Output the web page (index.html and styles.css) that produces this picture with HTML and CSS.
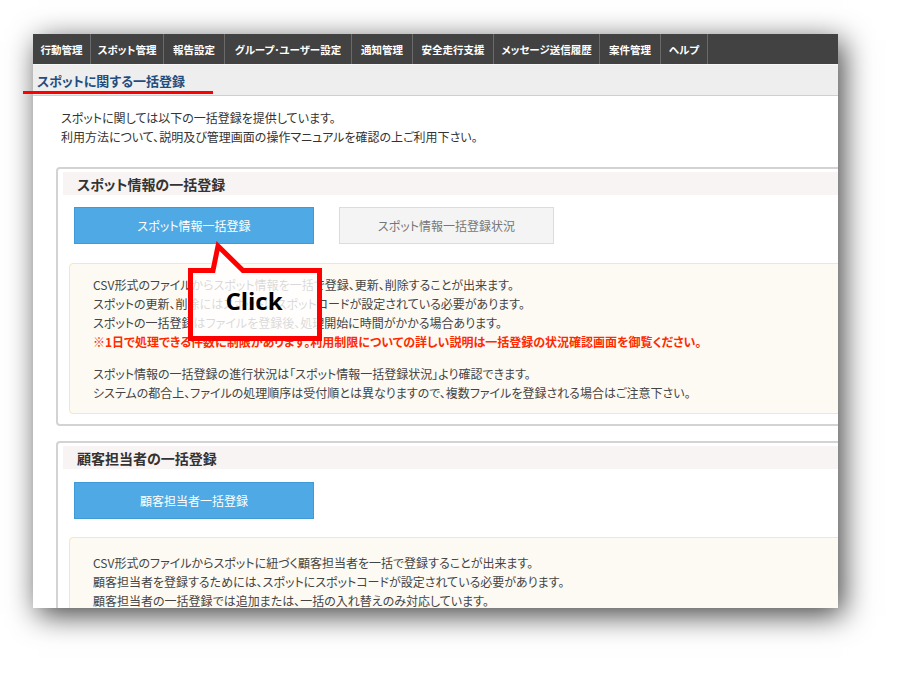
FILE: index.html
```html
<!DOCTYPE html>
<html lang="ja">
<head>
<meta charset="utf-8">
<title>スポットに関する一括登録</title>
<link rel="stylesheet" href="styles.css">
</head>
<body>
<div class="frame">
  <nav class="nav">
    <a>行動管理</a>
    <a>スポット管理</a>
    <a>報告設定</a>
    <a>グループ･ユーザー設定</a>
    <a>通知管理</a>
    <a>安全走行支援</a>
    <a>メッセージ送信履歴</a>
    <a>案件管理</a>
    <a>ヘルプ</a>
  </nav>
  <div class="subhead">スポットに関する一括登録</div>
  <div class="content">
    <p class="intro">スポットに関しては以下の一括登録を提供しています。<br>利用方法について、説明及び管理画面の操作マニュアルを確認の上ご利用下さい。</p>

    <section class="panel">
      <div class="panel-head">スポット情報の一括登録</div>
      <div class="btns">
        <div class="btn btn-primary">スポット情報一括登録</div>
        <div class="btn btn-gray">スポット情報一括登録状況</div>
      </div>
      <div class="notice">
        <p>CSV形式のファイルからスポット情報を一括で登録、更新、削除することが出来ます。<br>
        スポットの更新、削除にはスポットにスポットコードが設定されている必要があります。<br>
        スポットの一括登録はファイルを登録後、処理開始に時間がかかる場合あります。<br>
        <span class="warn">※1日で処理できる件数に制限があります。利用制限についての詳しい説明は一括登録の状況確認画面を御覧ください。</span></p>
        <p>スポット情報の一括登録の進行状況は「スポット情報一括登録状況」より確認できます。<br>
        システムの都合上、ファイルの処理順序は受付順とは異なりますので、複数ファイルを登録される場合はご注意下さい。</p>
      </div>
    </section>

    <section class="panel">
      <div class="panel-head">顧客担当者の一括登録</div>
      <div class="btns">
        <div class="btn btn-primary">顧客担当者一括登録</div>
      </div>
      <div class="notice notice-tall">
        <p>CSV形式のファイルからスポットに紐づく顧客担当者を一括で登録することが出来ます。<br>
        顧客担当者を登録するためには、スポットにスポットコードが設定されている必要があります。<br>
        顧客担当者の一括登録では追加または、一括の入れ替えのみ対応しています。</p>
      </div>
    </section>
  </div>
</div>

<div class="underline"></div>

<svg class="callout" width="150" height="115" viewBox="0 0 150 115" xmlns="http://www.w3.org/2000/svg">
  <polygon points="10.5,34.5 33,34.5 38,10 63,34.5 139.5,34.5 139.5,102.5 10.5,102.5" fill="rgba(255,255,255,0.8)" stroke="#ff0000" stroke-width="5" stroke-linejoin="miter"/>
  <text x="74" y="74" text-anchor="middle" class="callout-text">Click</text>
</svg>
</body>
</html>
```

FILE: styles.css
```css
* { box-sizing: border-box; }

body {
  margin: 0;
  background: #fff;
  font-family: "Noto Sans CJK JP", "Liberation Sans", sans-serif;
  font-feature-settings: "palt";
  position: relative;
  min-height: 673px;
}

.frame {
  margin: 34px 0 0 33px;
  width: 805px;
  height: 574px;
  overflow: hidden;
  background: #fff;
  box-shadow: 5px 7px 28px rgba(0, 0, 0, 0.75);
}

.nav {
  display: flex;
  height: 30px;
  background: #424242;
}

.nav a {
  color: #fff;
  font-size: 10.5px;
  font-weight: 700;
  display: flex;
  align-items: center;
  justify-content: center;
  border-right: 1px solid #6a6a6a;
  white-space: nowrap;
}

.nav a:nth-child(1) { width: 58px; }
.nav a:nth-child(2) { width: 73px; }
.nav a:nth-child(3) { width: 61px; }
.nav a:nth-child(4) { width: 127px; }
.nav a:nth-child(5) { width: 61px; }
.nav a:nth-child(6) { width: 81px; }
.nav a:nth-child(7) { width: 106px; }
.nav a:nth-child(8) { width: 61px; }
.nav a:nth-child(9) { width: 47px; }

.subhead {
  height: 32px;
  background: #eeeeee;
  border-top: 1px solid #f7f7f7;
  border-bottom: 1px solid #cfcfcf;
  padding-left: 4px;
  display: flex;
  align-items: center;
  font-size: 13px;
  font-weight: 700;
  color: #1f4d80;
}

.content {
  padding-top: 12px;
}

.intro {
  margin: 0 0 0 28px;
  font-size: 12px;
  line-height: 19px;
  color: #333;
}

.panel {
  margin: 21px 0 0 23px;
  width: 820px;
  border: 2px solid #d3d3d3;
  border-radius: 4px;
  padding: 3px 0 10px 0;
}

.panel + .panel {
  margin-top: 15px;
}

.panel-head {
  margin-left: 5px;
  height: 23px;
  background: #f8f4f3;
  padding-left: 14px;
  display: flex;
  align-items: center;
  font-size: 14px;
  font-weight: 700;
  color: #333;
}

.btns {
  display: flex;
  gap: 25px;
  margin: 12px 0 0 16px;
}

.panel + .panel .btns {
  margin-top: 13px;
}

.btn {
  height: 37px;
  display: flex;
  align-items: center;
  justify-content: center;
  font-size: 12px;
}

.btn-primary {
  width: 240px;
  background: #4fa9e4;
  border: 1px solid #3f9bd7;
  color: #fff;
}

.btn-gray {
  width: 215px;
  background: #f4f4f4;
  border: 1px solid #dcdcdc;
  color: #777;
}

.notice {
  margin: 19px 0 0 11px;
  background: #fcfaf3;
  border: 1px solid #f6e8b8;
  border-radius: 4px;
  padding: 11px 0 11px 23px;
  font-size: 12px;
  line-height: 19px;
  color: #444;
  white-space: nowrap;
}

.notice-tall {
  margin-top: 18px;
  padding-top: 15px;
}

.notice p {
  margin: 0;
}

.notice p + p {
  margin-top: 13px;
}

.warn {
  color: #ff2a00;
  font-weight: 700;
}

.underline {
  position: absolute;
  left: 23px;
  top: 91px;
  width: 190px;
  height: 3px;
  background: #ff0000;
}

.callout {
  position: absolute;
  left: 180px;
  top: 236px;
}

.callout-text {
  font-family: "Open Sans", "Liberation Sans", sans-serif;
  font-weight: 700;
  font-size: 24px;
  fill: #000;
}
```
